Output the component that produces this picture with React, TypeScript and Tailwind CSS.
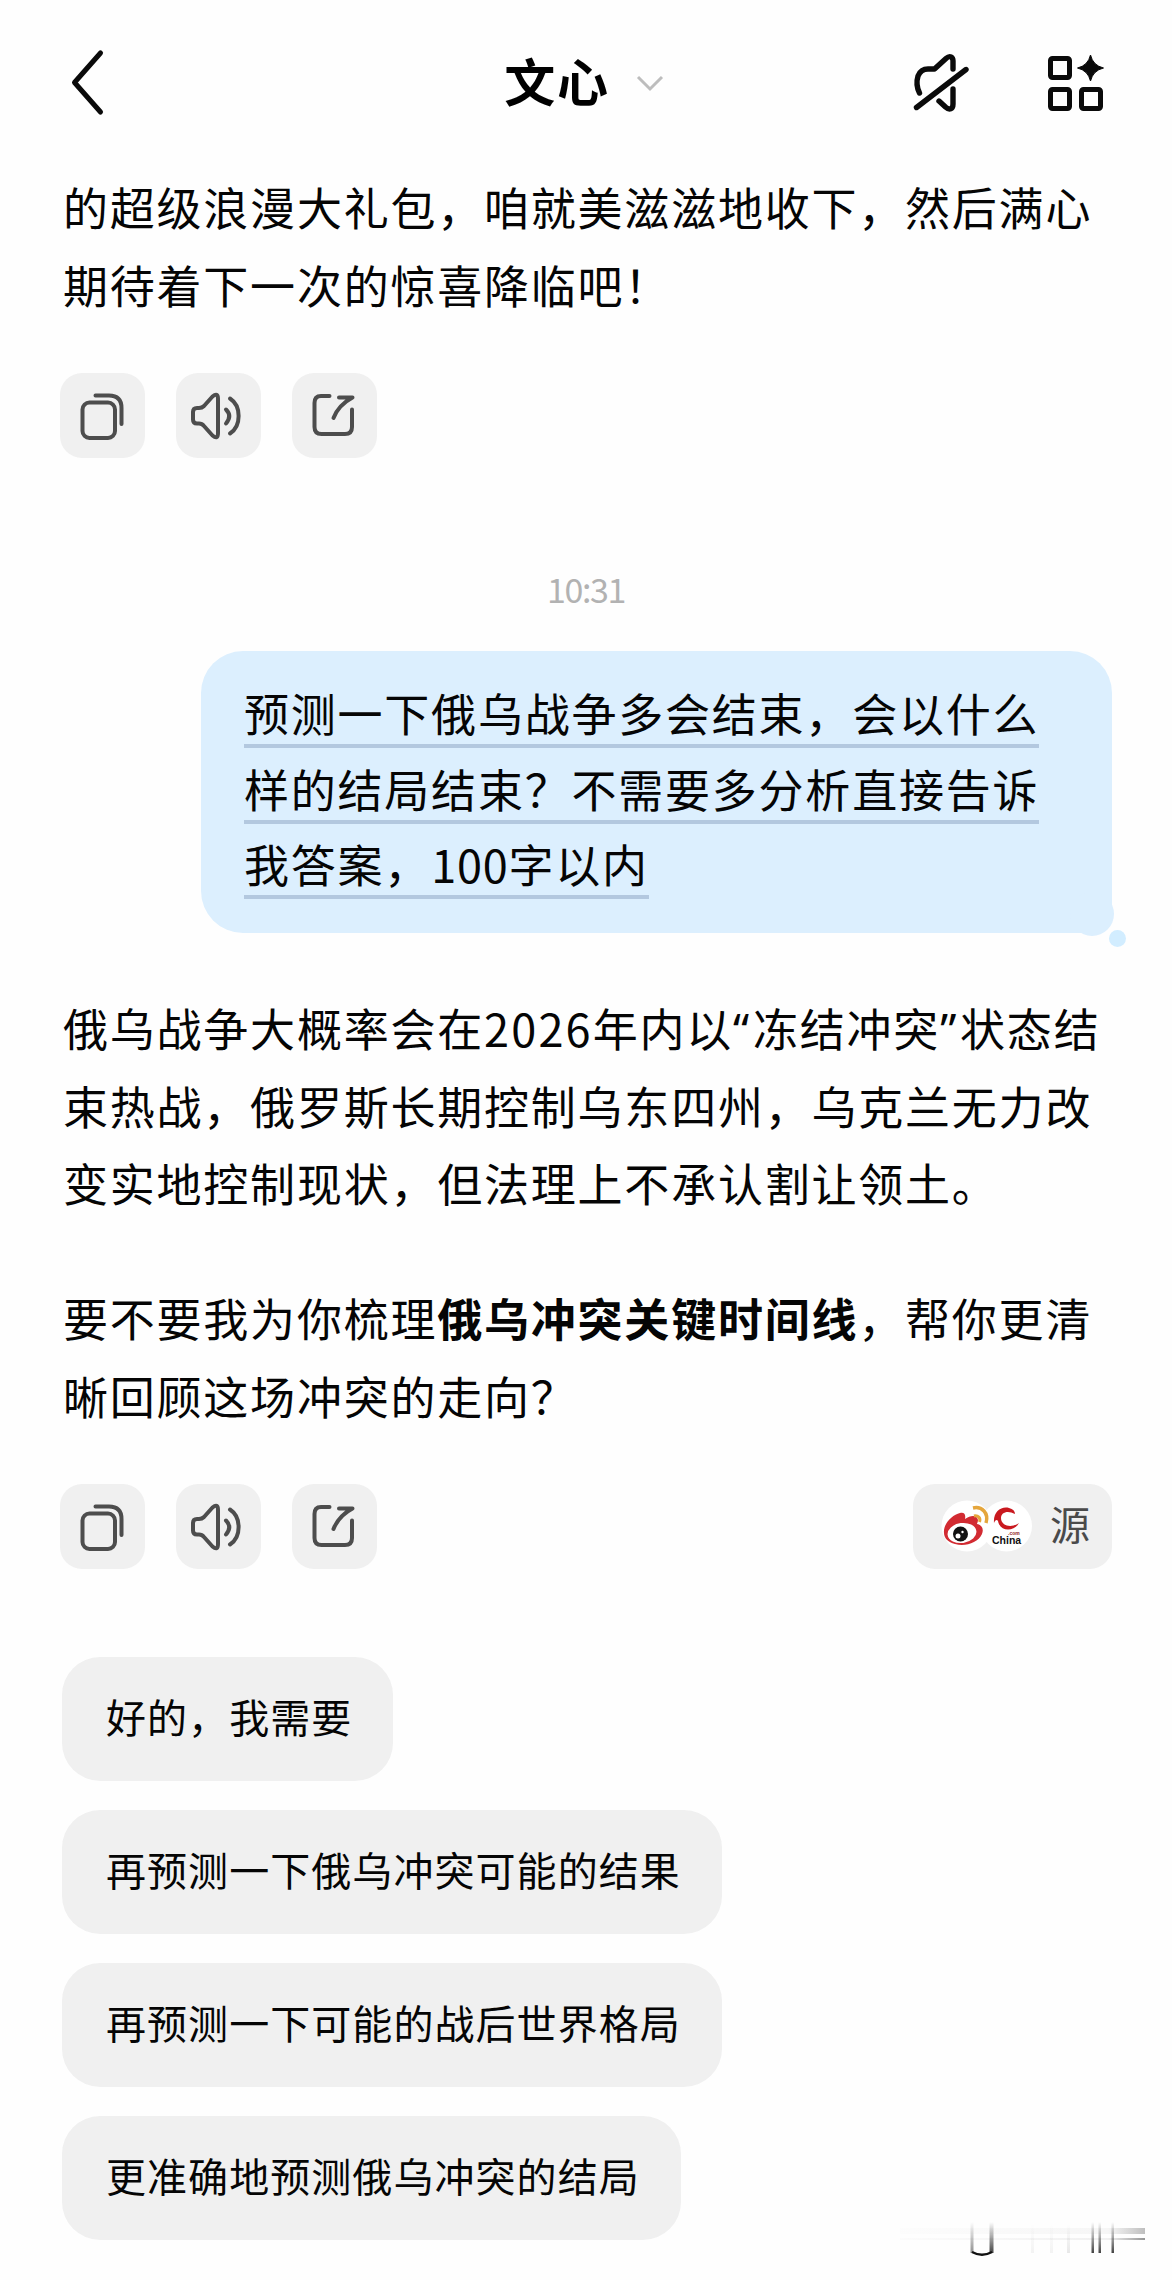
import React from "react";

const lines = {
  intro: ["的超级浪漫大礼包，咱就美滋滋地收下，然后满心", "期待着下一次的惊喜降临吧！"],
  replies: ["好的，我需要", "再预测一下俄乌冲突可能的结果", "再预测一下可能的战后世界格局", "更准确地预测俄乌冲突的结局"],
};

const question: React.ReactNode[] = [
  "预测一下俄乌战争多会结束，会以什么",
  "样的结局结束？不需要多分析直接告诉",
  <>我答案，<span className="tracking-[0.8px]">100</span>字以内</>,
];

const iconButton = "flex size-[85px] items-center justify-center rounded-[22px] bg-[#f0f0f0]";

function Quote({ children }: { children: string }) {
  return <span className="mr-[2px] font-['Noto_Sans'] leading-none">{children}</span>;
}

function Header() {
  return (
    <header className="flex h-[166px] items-center justify-between pl-[64px] pr-[68px]">
      <div className="w-[400px]">
        <svg className="block h-[72px] w-[44px]" viewBox="64 47 44 72" fill="none" stroke="#0a0a0a" strokeWidth="5" strokeLinecap="round" strokeLinejoin="round">
          <path d="M100.500 53 74.500 82.500 100.500 112" />
        </svg>
      </div>
      <div className="flex items-center gap-[26px]">
        <h1 className="-mt-[7px] whitespace-nowrap text-[51px] font-bold leading-[72px] text-black">文心</h1>
        <svg className="block h-[18px] w-[28px]" viewBox="0 0 28 18" fill="none" stroke="#bdbdbd" strokeWidth="3">
          <path d="M2 3 14 15 26 3" />
        </svg>
      </div>
      <div className="flex w-[400px] items-center justify-end gap-[76px]">
        <svg className="block h-[64px] w-[58px]" viewBox="911 51 58 64" fill="none" stroke="#0a0a0a" strokeWidth="5.4" strokeLinecap="round" strokeLinejoin="round">
          <path d="M918.500 93C916 88 915.500 81 917 76C919 71 922 69 927 69H933.500L945 58.500C949 55 952 57 952 61V69" />
          <path d="M938 101 944.500 107C948.500 110.500 952 109 952 104V89" />
          <path d="M915.500 107.500 965 69.500" />
        </svg>
        <svg className="block h-[60px] w-[58px]" viewBox="1045 52 58 60" fill="none" stroke="#0a0a0a" strokeWidth="5">
          <rect x="1049.500" y="57.500" width="19" height="19" rx="2" />
          <rect x="1049.500" y="88.500" width="19" height="19" rx="2" />
          <rect x="1080.500" y="88.500" width="19" height="19" rx="2" />
          <path d="M1089.500 54Q1092 64.500 1102.500 67Q1092 69.500 1089.500 80Q1087 69.500 1076.500 67Q1087 64.500 1089.500 54Z" fill="#0a0a0a" stroke="#0a0a0a" strokeWidth="1" />
        </svg>
      </div>
    </header>
  );
}

function Actions() {
  return (
    <div className="flex gap-[31px]">
      <button className={iconButton}>
        <svg className="size-[85px]" viewBox="0 0 85 85" fill="none" stroke="#4d4d4d" strokeWidth="4" strokeLinecap="round">
          <rect x="22.500" y="29.500" width="32.500" height="35.500" rx="7" />
          <path d="M35.500 22.500H49Q61.500 22.500 61.500 35V51" />
        </svg>
      </button>
      <button className={iconButton}>
        <svg className="size-[85px]" viewBox="0 0 85 85" fill="none" stroke="#4d4d4d" strokeWidth="4" strokeLinecap="round" strokeLinejoin="round">
          <path d="M17 39Q17 35 21 35H23Q26 35 28 33L36.500 23.500Q42 19 42 26V60Q42 67 36.500 62.500L28 53Q26 50.500 23 50.500H21Q17 50.500 17 46.500Z" />
          <path d="M50 36.500Q56.500 43 50 50.500" />
          <path d="M54 25.500C65.500 33 65.500 53 54 60.500" />
        </svg>
      </button>
      <button className={iconButton}>
        <svg className="size-[85px]" viewBox="0 0 85 85" fill="none" stroke="#4d4d4d" strokeWidth="4" strokeLinecap="round" strokeLinejoin="round">
          <path d="M37.500 23H29Q22.500 23 22.500 30V54Q22.500 61 29.500 61H53Q60 61 60 54V36.500" />
          <path d="M47 24.500H60.500Q46.500 32 41.500 45" />
        </svg>
      </button>
    </div>
  );
}

function Sources() {
  return (
    <button className="flex h-[85px] w-[199px] items-center rounded-[22px] bg-[#f0f0f0] pl-[27px]">
      <svg className="block h-[52px] w-[93px] shrink-0 tracking-normal" viewBox="0 0 93 52">
        <circle cx="27" cy="26" r="25.500" fill="#fff" />
        <circle cx="66.500" cy="26" r="25.500" fill="#fff" />
        <path d="M4 33C3 24 12 15 20 13C24 12 26 14 25 19C31 15 37 15 38 20C38 22 37 23 37 24C42 25 44 29 42 34C38 43 25 47 15 44C8 42 4 38 4 33Z" fill="#d22b32" />
        <ellipse cx="22" cy="33" rx="14.500" ry="10" fill="#fff" transform="rotate(-8 22 33)" />
        <circle cx="20.500" cy="34" r="7.500" fill="#111" />
        <circle cx="18" cy="36" r="2.500" fill="#fff" />
        <circle cx="22.500" cy="32" r="1.200" fill="#fff" />
        <path d="M33 8C42 6 49 13 46 23" fill="none" stroke="#e5a63c" strokeWidth="3.500" />
        <path d="M34 16C38 15 41 18 39.500 22" fill="none" stroke="#e5a63c" strokeWidth="3" />
        <path d="M54 23C53 12 61 6 69 8C73 9 75 11 75 14C68 10 61 12 61 18C61 25 70 29 79 23C74 32 60 32 58 21C57 19 55 20 54 23Z" fill="#c9191f" />
        <text x="52" y="43.500" fontSize="10.500" fontWeight="700" fontFamily="Liberation Sans, sans-serif" fill="#111">China</text>
        <text x="68" y="34.500" fontSize="5" fontWeight="700" fontFamily="Liberation Sans, sans-serif" fill="#8d2024">.com</text>
      </svg>
      <span className="-mt-[6px] ml-[17px] text-[40px] leading-none text-[#4a4a4a]">源</span>
    </button>
  );
}

function CornerMark() {
  return (
    <svg className="absolute bottom-[15px] right-[16px] h-[50px] w-[266px]" viewBox="890 2215 266 50" fill="none">
      <defs>
        <linearGradient id="fadeDown" x1="0" y1="0" x2="0" y2="1">
          <stop offset="0" stopColor="#333" stopOpacity="0" />
          <stop offset="1" stopColor="#222" stopOpacity="0.850" />
        </linearGradient>
        <linearGradient id="fadeRight" x1="0" y1="0" x2="1" y2="0">
          <stop offset="0" stopColor="#777" stopOpacity="0.020" />
          <stop offset="0.850" stopColor="#777" stopOpacity="0.100" />
          <stop offset="1" stopColor="#666" stopOpacity="0.700" />
        </linearGradient>
      </defs>
      <rect x="900" y="2228" width="245" height="6" fill="url(#fadeRight)" opacity="0.600" />
      <rect x="900" y="2238" width="245" height="2" fill="url(#fadeRight)" />
      <rect x="970.500" y="2222" width="3" height="31" fill="url(#fadeDown)" opacity="0.600" />
      <rect x="989.500" y="2222" width="4" height="31" fill="url(#fadeDown)" />
      <path d="M972 2252Q982 2257.500 992 2252" stroke="#111" strokeWidth="2.400" />
      <rect x="1031" y="2224" width="3" height="29" fill="url(#fadeDown)" opacity="0.060" />
      <rect x="1050" y="2224" width="3" height="29" fill="url(#fadeDown)" opacity="0.060" />
      <rect x="1067" y="2224" width="3" height="29" fill="url(#fadeDown)" opacity="0.120" />
      <rect x="1091.500" y="2222" width="2.500" height="31" fill="url(#fadeDown)" />
      <rect x="1098.500" y="2222" width="2.500" height="31" fill="url(#fadeDown)" />
      <rect x="1111.500" y="2222" width="2.500" height="31" fill="url(#fadeDown)" />
    </svg>
  );
}

export default function App() {
  return (
    <main className="relative h-[2280px] w-[1172px] overflow-hidden bg-[#fefefe] font-['Noto_Sans_CJK_SC',sans-serif] text-[45px] tracking-[1.78px] text-[#050505]">
      <Header />
      <p className="mt-[2px] whitespace-nowrap pl-[63px] leading-[78px]">
        {lines.intro.map((l) => <span key={l} className="block">{l}</span>)}
      </p>
      <div className="mt-[49px] pl-[60px]"><Actions /></div>

      <time className="mt-[111px] block h-[40px] text-center text-[34px] leading-[40px] tracking-[-1.4px] text-[#b2b2b2]">10:31</time>

      <section className="relative ml-[201px] mt-[42px] h-[282px] w-[911px] rounded-[42px] rounded-br-[24px] bg-[#dceffe] pl-[43px] pt-[27px]">
        {question.map((l, i) => (
          <div key={i} className="flex h-[75.700px]">
            <span className="block h-[70px] whitespace-nowrap border-b-4 border-[#b3c8df] leading-[70px]">{l}</span>
          </div>
        ))}
        <i className="absolute bottom-[-3px] right-[-2px] size-[44px] rounded-full bg-[#dceffe]" />
        <i className="absolute bottom-[-14px] right-[-14px] size-[17px] rounded-full bg-[#d2edff]" />
      </section>

      <p className="mt-[56px] whitespace-nowrap pl-[63px] leading-[77.700px]">
        俄乌战争大概率会在<span className="tracking-[2.200px]">2026</span>年内以<Quote>“</Quote>冻结冲突<Quote>”</Quote>状态结<br />
        束热战，俄罗斯长期控制乌东四州，乌克兰无力改<br />
        变实地控制现状，但法理上不承认割让领土。
      </p>
      <p className="mt-[57px] whitespace-nowrap pl-[63px] leading-[78px]">
        要不要我为你梳理<b className="font-bold">俄乌冲突关键时间线</b>，帮你更清<br />
        晰回顾这场冲突的走向？
      </p>

      <div className="mt-[48.500px] flex justify-between pl-[60px] pr-[60px]">
        <Actions />
        <Sources />
      </div>

      <div className="mt-[88px] flex flex-col items-start gap-[28.500px] pl-[62px]">
        {lines.replies.map((r) => (
          <button key={r} className="h-[124.500px] whitespace-nowrap rounded-[38px] bg-[#f0f0f0] pb-[6px] pl-[44px] pr-[41px] text-[40px] leading-[60px] tracking-[1.060px]">{r}</button>
        ))}
      </div>
      <CornerMark />
    </main>
  );
}
